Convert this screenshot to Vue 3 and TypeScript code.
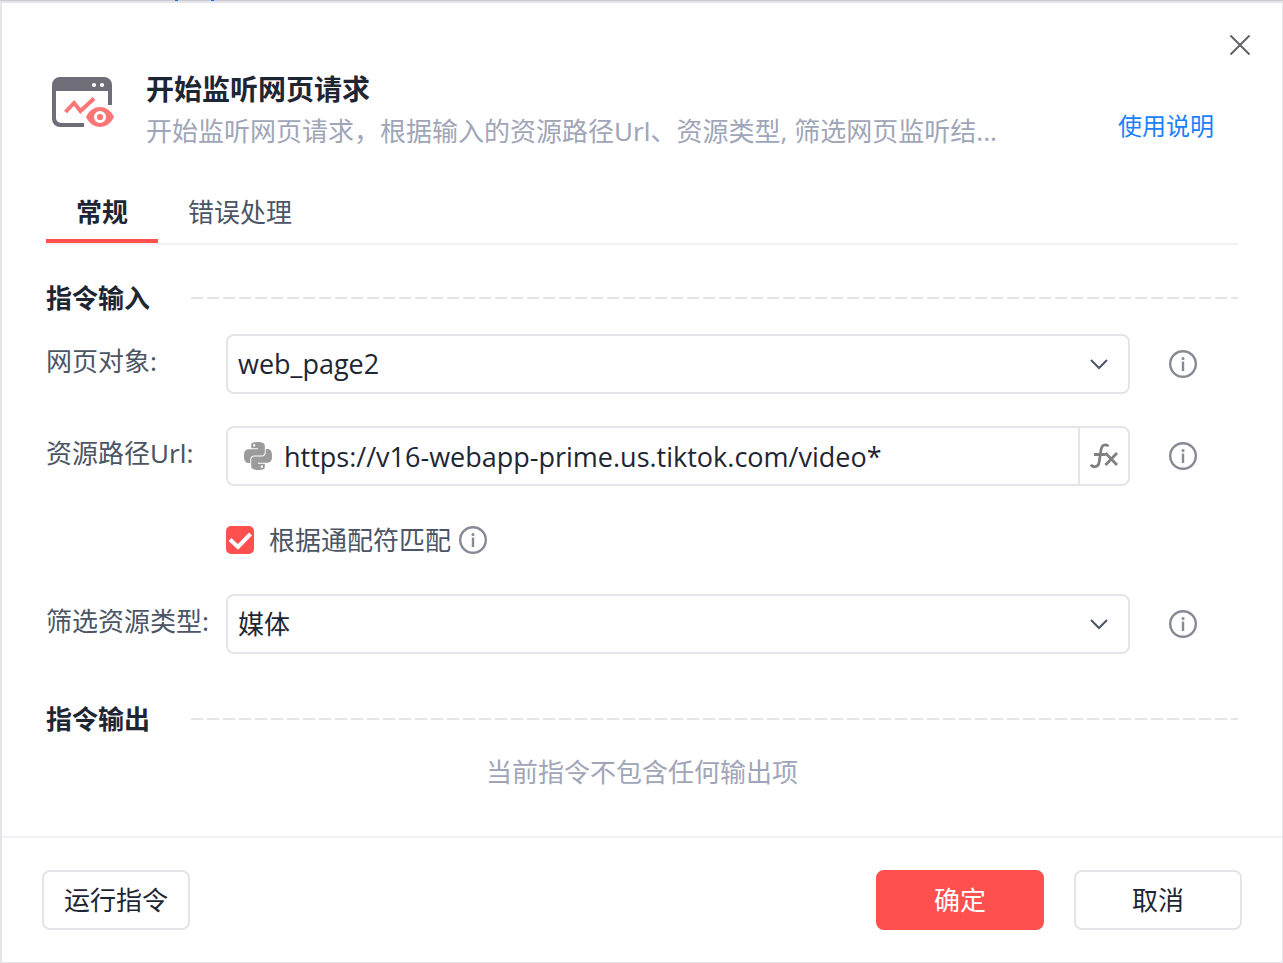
<script setup lang="ts">
import { ref } from 'vue'

const tabs = ['常规', '错误处理']
const activeTab = ref(0)
const page = ref('web_page2')
const url = ref('https://v16-webapp-prime.us.tiktok.com/video*')
const wildcard = ref(true)
const resource = ref('媒体')
</script>

<template>
  <div class="backdrop">
    <div class="behind"><i></i><i></i></div>
    <main class="dialog">
      <div class="topbar">
        <button class="icon-btn close" type="button" aria-label="关闭">
          <svg width="22" height="22" viewBox="0 0 22 22"><path d="M1.5 1.5l19 19M20.5 1.5l-19 19" stroke="#606266" stroke-width="2" fill="none" /></svg>
        </button>
      </div>

      <header class="head">
        <svg class="logo" width="64" height="52" viewBox="0 0 64 52" aria-hidden="true">
          <path d="M8 1h44a8 8 0 0 1 8 8v20h-4V15H4v27a5 5 0 0 0 5 5h23v4H8a8 8 0 0 1-8-8V9a8 8 0 0 1 8-8z" fill="#6f6d78" />
          <circle cx="42" cy="9" r="2.1" fill="#fff" />
          <circle cx="50" cy="9" r="2.1" fill="#fff" />
          <path d="M13.500 36l8.500-9 6.500 8L42 22.500" fill="none" stroke="#fb7777" stroke-width="4" />
          <path d="M34 41c6-13.300 22-13.300 28 0-6 13.300-22 13.300-28 0z" fill="#fb7777" />
          <circle cx="48" cy="41" r="4.600" fill="#fb7777" stroke="#fff" stroke-width="3" />
        </svg>
        <div class="titles">
          <h1>开始监听网页请求</h1>
          <p>开始监听网页请求，根据输入的资源路径Url、资源类型, 筛选网页监听结...</p>
        </div>
        <a class="help" href="#">使用说明</a>
      </header>

      <nav class="tabs" role="tablist">
        <button v-for="(t, i) in tabs" :key="t" type="button" role="tab" :aria-selected="i === activeTab" :class="{ active: i === activeTab }" @click="activeTab = i">{{ t }}</button>
      </nav>

      <section class="inputs">
        <h2>指令输入</h2>
        <div class="row">
          <label for="page">网页对象:</label>
          <div class="control">
            <select id="page" v-model="page" class="latin"><option>web_page2</option></select>
            <svg class="chevron" width="20" height="12" viewBox="0 0 20 12"><path d="M2 2l8 8 8-8" fill="none" stroke="#4b5565" stroke-width="2" /></svg>
          </div>
          <button class="icon-btn" type="button" aria-label="网页对象说明">
            <svg width="28" height="28" viewBox="0 0 28 28"><circle cx="14" cy="14" r="12.800" fill="none" stroke="#868a94" stroke-width="2.400" /><path d="M14 11.500v9.500" stroke="#868a94" stroke-width="2.400" /><circle cx="14" cy="8.500" r="1.500" fill="#868a94" /></svg>
          </button>
        </div>

        <div class="row">
          <label for="url">资源路径Url:</label>
          <div class="control">
            <svg class="python" width="28" height="28" viewBox="0 0 24 24" aria-hidden="true">
              <path fill="#9b9b9b" d="M14.250.18l.9.200.73.260.59.300.45.320.34.340.250.340.160.330.100.300.040.260.020.200-.010.130V8.500l-.050.630-.130.550-.210.460-.260.380-.300.310-.330.250-.350.190-.350.140-.330.100-.300.070-.260.040-.210.020H8.770l-.690.050-.590.140-.500.220-.410.270-.330.320-.270.350-.200.360-.150.370-.100.350-.070.320-.040.270-.020.210v3.060H3.170l-.210-.030-.280-.070-.320-.120-.350-.180-.360-.260-.360-.360-.350-.460-.320-.590-.280-.730-.210-.880-.140-1.050-.050-1.230.060-1.220.160-1.040.240-.870.320-.710.360-.570.400-.440.420-.330.420-.240.400-.160.360-.100.320-.050.240-.010h.160l.060.010h8.160v-.830H6.180l-.010-2.750-.020-.370.050-.340.110-.310.170-.280.250-.260.310-.230.380-.200.440-.180.510-.150.580-.120.640-.100.710-.060.770-.040.840-.020 1.270.050zm-6.300 1.980l-.230.330-.080.410.080.410.230.340.330.220.410.090.410-.090.330-.220.230-.340.080-.410-.080-.410-.230-.330-.330-.220-.410-.090-.410.090zm13.090 3.950l.280.060.320.120.350.180.360.270.360.350.350.470.320.590.280.730.210.880.140 1.040.050 1.230-.060 1.230-.160 1.040-.240.860-.320.710-.360.570-.400.450-.420.330-.420.240-.400.160-.360.090-.320.050-.240.020-.160-.010h-8.220v.820h5.840l.010 2.760.020.360-.050.340-.110.310-.170.290-.250.250-.310.240-.380.200-.440.170-.510.150-.580.130-.640.090-.710.070-.770.040-.840.010-1.270-.040-1.070-.140-.900-.200-.730-.250-.590-.300-.450-.330-.340-.340-.250-.340-.160-.330-.100-.300-.040-.250-.020-.200.010-.130v-5.340l.050-.640.130-.540.210-.460.260-.380.300-.320.330-.240.350-.200.350-.140.330-.100.300-.060.260-.040.210-.020.130-.010h5.840l.690-.050.590-.140.500-.210.410-.280.330-.320.270-.350.200-.360.150-.360.100-.350.070-.320.040-.280.020-.210V6.070h2.090l.140.010zm-6.470 14.250l-.230.330-.080.410.080.410.230.330.330.230.410.080.410-.080.330-.230.230-.330.080-.410-.080-.410-.230-.330-.330-.230-.410-.080-.410.080z" />
            </svg>
            <input id="url" v-model="url" type="text" class="latin" />
            <button class="fx" type="button" aria-label="编辑表达式">
              <svg width="28" height="26" viewBox="0 0 28 26" fill="none" stroke="#808080" stroke-width="2.800"><path d="M1 21.500q1 2.500 4 2.200 3.500-.400 4.200-4.700L11 7q.800-5 4-5.200 2.500-.200 3 1.700M4 11.500h11.500M15.500 10l11.500 12M27 10L15.500 22" /></svg>
            </button>
          </div>
          <button class="icon-btn" type="button" aria-label="资源路径说明">
            <svg width="28" height="28" viewBox="0 0 28 28"><circle cx="14" cy="14" r="12.800" fill="none" stroke="#868a94" stroke-width="2.400" /><path d="M14 11.500v9.500" stroke="#868a94" stroke-width="2.400" /><circle cx="14" cy="8.500" r="1.500" fill="#868a94" /></svg>
          </button>
        </div>

        <div class="check-row">
          <span class="check">
            <input id="wild" v-model="wildcard" type="checkbox" />
            <svg v-if="wildcard" width="28" height="28" viewBox="0 0 28 28"><path d="M4 13.500l8 7.500L24.500 8" fill="none" stroke="#fff" stroke-width="4" /></svg>
          </span>
          <label for="wild">根据通配符匹配</label>
          <button class="icon-btn" type="button" aria-label="通配符说明">
            <svg width="28" height="28" viewBox="0 0 28 28"><circle cx="14" cy="14" r="12.800" fill="none" stroke="#868a94" stroke-width="2.400" /><path d="M14 11.500v9.500" stroke="#868a94" stroke-width="2.400" /><circle cx="14" cy="8.500" r="1.500" fill="#868a94" /></svg>
          </button>
        </div>

        <div class="row">
          <label for="res">筛选资源类型:</label>
          <div class="control">
            <select id="res" v-model="resource"><option>媒体</option></select>
            <svg class="chevron" width="20" height="12" viewBox="0 0 20 12"><path d="M2 2l8 8 8-8" fill="none" stroke="#4b5565" stroke-width="2" /></svg>
          </div>
          <button class="icon-btn" type="button" aria-label="资源类型说明">
            <svg width="28" height="28" viewBox="0 0 28 28"><circle cx="14" cy="14" r="12.800" fill="none" stroke="#868a94" stroke-width="2.400" /><path d="M14 11.500v9.500" stroke="#868a94" stroke-width="2.400" /><circle cx="14" cy="8.500" r="1.500" fill="#868a94" /></svg>
          </button>
        </div>
      </section>

      <section class="outputs">
        <h2>指令输出</h2>
        <p>当前指令不包含任何输出项</p>
      </section>

      <footer>
        <button class="btn run" type="button">运行指令</button>
        <button class="btn primary" type="button">确定</button>
        <button class="btn" type="button">取消</button>
      </footer>
    </main>
  </div>
</template>

<style>
body {
  background: #fff;
}
</style>

<style scoped>
* {
  box-sizing: border-box;
  margin: 0;
}
.backdrop {
  display: flex;
  flex-direction: column;
  min-height: 100vh;
  font-family: 'Noto Sans', 'Noto Sans CJK SC', sans-serif;
  font-size: 26px;
  line-height: 36px;
  color: #1f2633;
}
button,
input,
select {
  font: inherit;
  color: inherit;
  border: 0;
  padding: 0;
  background: none;
}
.behind {
  display: flex;
  gap: 34px;
  height: 1px;
  padding-left: 175px;
  background: #c9cbd0;
}
.behind i {
  width: 3px;
  background: #1a6fe0;
}
.behind i + i {
  margin-left: -1px;
}
.dialog {
  flex: 1;
  display: flex;
  flex-direction: column;
  border: 2px solid #e4e4ea;
  border-right-width: 1px;
  border-bottom-width: 1px;
  background: #fff;
}
.icon-btn {
  display: flex;
  flex: none;
}
.topbar {
  display: flex;
  justify-content: flex-end;
  padding: 31px 31px 0 0;
}
.head {
  display: flex;
  align-items: flex-start;
  padding: 15px 68px 0 50px;
}
.logo {
  flex: none;
  margin-top: 5px;
}
.titles {
  flex: 1;
  min-width: 0;
  margin-left: 30px;
}
h1 {
  font-size: 28px;
  line-height: 36px;
  font-weight: 700;
}
.titles p {
  line-height: 48px;
  color: #a0a6b8;
  white-space: nowrap;
  overflow: hidden;
  text-overflow: ellipsis;
}
.help {
  margin: 37px 0 0 16px;
  font-size: 24px;
  line-height: 36px;
  color: #1a80ff;
  text-decoration: none;
  white-space: nowrap;
}
.tabs {
  display: flex;
  margin: 30px 44px 0;
  border-bottom: 2px solid #f0f0f5;
}
.tabs button {
  height: 58px;
  padding: 0 30px;
  color: #4b5565;
  border-bottom: 4px solid transparent;
}
.tabs .active {
  font-weight: 700;
  color: #1f2633;
  border-color: #ff5050;
}
.inputs {
  padding: 35px 44px 0;
}
h2 {
  display: flex;
  align-items: center;
  gap: 41px;
  font-size: 26px;
  line-height: 36px;
  font-weight: 700;
}
h2::after {
  content: '';
  flex: 1;
  height: 2px;
  background: repeating-linear-gradient(90deg, #e4e4ea 0 12px, transparent 12px 16px);
}
.row {
  display: flex;
  align-items: center;
  height: 60px;
  margin-top: 32px;
  padding-right: 41px;
}
h2 + .row {
  margin-top: 18px;
}
.row > label {
  width: 180px;
  flex: none;
  padding-bottom: 6px;
  color: #4b5565;
  white-space: nowrap;
}
.control {
  position: relative;
  flex: 1;
  min-width: 0;
  display: flex;
  align-items: center;
  height: 60px;
  margin-right: 39px;
  border: 2px solid #e4e4ea;
  border-radius: 8px;
}
.control select {
  appearance: none;
  width: 100%;
  height: 56px;
  padding: 0 50px 0 10px;
  outline: none;
}
.control .latin {
  font-family: 'Open Sans', 'Noto Sans CJK SC', sans-serif;
  font-size: 27px;
}
.chevron {
  position: absolute;
  right: 19px;
  pointer-events: none;
}
.python {
  flex: none;
  margin: 0 12px 0 16px;
}
.control input {
  flex: 1;
  min-width: 0;
  height: 56px;
  outline: none;
}
.fx {
  display: flex;
  align-items: center;
  justify-content: center;
  width: 50px;
  height: 56px;
  border-left: 2px solid #e4e4ea;
}
.check-row {
  display: flex;
  align-items: center;
  margin: 36px 0 36px 180px;
  color: #4b5565;
}
.check-row label {
  margin: 0 8px 0 15px;
}
.check {
  position: relative;
  display: flex;
}
.check input {
  appearance: none;
  width: 28px;
  height: 28px;
  border: 2px solid #e4e4ea;
  border-radius: 5px;
}
.check input:checked {
  border-color: #ff5050;
  background: #ff5050;
}
.check svg {
  position: absolute;
  inset: 0;
  pointer-events: none;
}
.outputs {
  flex: 1;
  padding: 47px 44px 46px;
}
.outputs p {
  margin-top: 17px;
  text-align: center;
  color: #a0a6b8;
}
footer {
  display: flex;
  gap: 30px;
  padding: 32px 40px;
  border-top: 2px solid #f0f0f5;
}
.btn {
  width: 168px;
  height: 60px;
  border: 2px solid #e4e4ea;
  border-radius: 8px;
}
.run {
  width: 148px;
  margin-right: auto;
}
.primary {
  border-color: #ff5050;
  background: #ff5050;
  color: #fff;
}
</style>
